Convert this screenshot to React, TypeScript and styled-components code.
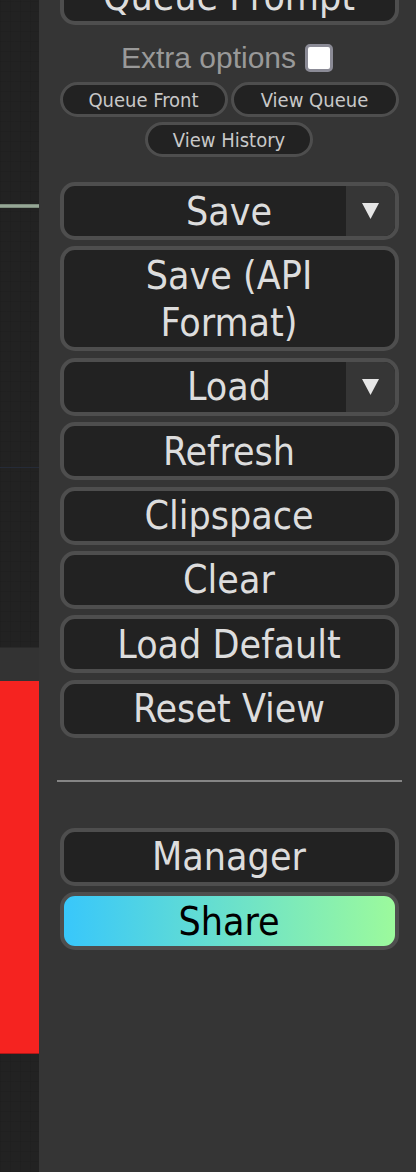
import React from 'react';
import styled, { createGlobalStyle } from 'styled-components';

const GlobalStyle = createGlobalStyle`
	html, body {
		margin: 0;
		padding: 0;
		background: #353535;
		overflow: hidden;
	}
`;

const Page = styled.div`
	display: flex;
	width: 416px;
	height: 1172px;
	overflow: hidden;
`;

const Canvas = styled.div`
	position: relative;
	flex: 0 0 39px;
	background-color: #222;
	background-image:
		repeating-linear-gradient(0deg, rgba(0, 0, 0, 0.05) 0 1px, transparent 1px 10px),
		repeating-linear-gradient(90deg, rgba(0, 0, 0, 0.05) 0 1px, transparent 1px 10px);
	overflow: hidden;
`;

const Wire = styled.div<{ $top: number; $color: string; $thick: number }>`
	position: absolute;
	left: 0;
	right: 0;
	top: ${(p) => p.$top}px;
	height: ${(p) => p.$thick}px;
	background: ${(p) => p.$color};
`;

const NodeTitle = styled.div`
	position: absolute;
	left: 0;
	right: 0;
	top: 647px;
	height: 34px;
	background: #333;
	border-top: 1px solid #2a2a2a;
`;

const NodeBody = styled.div`
	position: absolute;
	left: 0;
	right: 0;
	top: 681px;
	height: 372px;
	background: #f52320;
	border-bottom: 1px solid #b01818;
`;

const Menu = styled.div`
	flex: 1;
	display: flex;
	flex-direction: column;
	padding: 0 18px 0 20.5px;
	background: #353535;
	color: #999;
	font-family: 'Liberation Sans', Arial, sans-serif;
`;

const MainButton = styled.button<{ $first?: boolean }>`
	position: relative;
	display: block;
	width: 100%;
	margin: ${(p) => (p.$first ? '-33px' : '6.4px')} 0 0;
	padding: 1.5px 0;
	border: 4px solid #4e4e4e;
	border-radius: 15px;
	background: #222;
	color: #ddd;
	font-family: 'DejaVu Sans Condensed', 'DejaVu Sans', sans-serif;
	font-stretch: condensed;
	font-size: 39px;
	line-height: 47px;
	text-align: center;
	overflow: hidden;
	cursor: pointer;
`;

const ShareButton = styled(MainButton)`
	background: linear-gradient(to right, #38c7fb, #9cfa9c);
	color: #000;
`;

const DropPart = styled.span`
	position: absolute;
	top: 0;
	right: 0;
	bottom: 0;
	width: 49px;
	display: flex;
	align-items: center;
	justify-content: center;
	background: #363636;
`;

const OptionsRow = styled.label`
	display: flex;
	align-items: center;
	justify-content: center;
	gap: 9px;
	height: 48px;
	margin-top: 9px;
	padding-right: 4px;
	font-size: 30px;
	color: #999;
`;

const CheckBox = styled.span`
	display: inline-block;
	box-sizing: border-box;
	width: 28px;
	height: 28px;
	border: 3px solid #8b8b96;
	border-radius: 5px;
	background: #fff;
`;

const SmallRow = styled.div<{ $gap: number }>`
	display: flex;
	justify-content: center;
	gap: 3px;
	margin-top: ${(p) => p.$gap}px;
`;

const SmallButton = styled.button`
	box-sizing: border-box;
	width: 168px;
	height: 35px;
	padding: 0;
	border: 3.5px solid #4e4e4e;
	border-radius: 18px;
	background: #222;
	color: #c8c8c8;
	font-family: 'DejaVu Sans Condensed', 'DejaVu Sans', sans-serif;
	font-stretch: condensed;
	font-size: 20px;
	line-height: 26px;
	cursor: pointer;
`;

const Divider = styled.hr`
	margin: 42px -3px 46px -2.5px;
	border: none;
	height: 2px;
	background: #858585;
`;

const Arrow = () => (
	<svg width="17" height="16" viewBox="0 0 17 16">
		<path d="M0 0 H17 L8.5 16 Z" fill="#e6e6e6" />
	</svg>
);

const mainButtons = ['Refresh', 'Clipspace', 'Clear', 'Load Default', 'Reset View'];

export default function App() {
	return (
		<>
			<GlobalStyle />
			<Page>
				<Canvas>
					<Wire $top={204} $thick={4} $color="linear-gradient(#6f7f6f, #a3b3a3 50%, #6f7f6f)" />
					<Wire $top={467} $thick={1} $color="#252b38" />
					<NodeTitle />
					<NodeBody />
				</Canvas>
				<Menu>
					<MainButton $first>Queue Prompt</MainButton>
					<OptionsRow>
						Extra options
						<CheckBox />
					</OptionsRow>
					<SmallRow $gap={0}>
						<SmallButton>Queue Front</SmallButton>
						<SmallButton>View Queue</SmallButton>
					</SmallRow>
					<SmallRow $gap={5}>
						<SmallButton>View History</SmallButton>
					</SmallRow>
					<MainButton style={{ marginTop: 25 }}>
						Save
						<DropPart>
							<Arrow />
						</DropPart>
					</MainButton>
					<MainButton>
						Save (API
						<br />
						Format)
					</MainButton>
					<MainButton>
						Load
						<DropPart>
							<Arrow />
						</DropPart>
					</MainButton>
					{mainButtons.map((label) => (
						<MainButton key={label}>{label}</MainButton>
					))}
					<Divider />
					<MainButton style={{ marginTop: 0 }}>Manager</MainButton>
					<ShareButton>Share</ShareButton>
				</Menu>
			</Page>
		</>
	);
}
